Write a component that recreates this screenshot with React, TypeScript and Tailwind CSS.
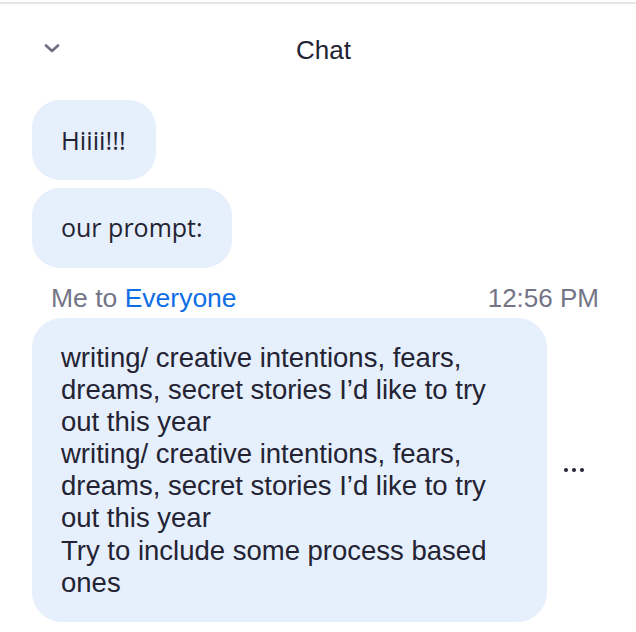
import React from "react";

const bubbleFont = { fontFamily: '"Open Sans", "Liberation Sans", Arial, sans-serif' };

export default function App() {
  const lines = [
    "writing/ creative intentions, fears,",
    "dreams, secret stories I\u2019d like to try",
    "out this year",
    "writing/ creative intentions, fears,",
    "dreams, secret stories I\u2019d like to try",
    "out this year",
    "Try to include some process based",
    "ones",
  ];
  return (
    <div className="w-[636px] h-[632px] bg-white overflow-hidden font-['Liberation_Sans',Arial,sans-serif] text-[#232333]">
      <div className="mt-[2px] h-[2px] bg-[#e6e6e6]" />
      <div className="mt-[31px] flex h-[30px]">
        <div className="w-[60px] pl-[44px] pt-[9px]">
          <svg width="16" height="9" viewBox="0 0 16 9" fill="none">
            <path d="M2 1.5 L8 7 L14 1.5" stroke="#6f6f80" strokeWidth="2.6" strokeLinecap="round" strokeLinejoin="round" />
          </svg>
        </div>
        <div className="flex-1 text-center text-[26px] leading-[30px] text-[#232333]">Chat</div>
        <div className="w-[49px]" />
      </div>
      <div className="mt-[35px] px-[32px] flex flex-col">
        <div className="flex">
          <div className="h-[80px] pl-[29px] pr-[30px] rounded-[28px] bg-[#e6effc] flex items-center text-[25.5px]" style={bubbleFont}>
            Hiiii!!!
          </div>
        </div>
        <div className="flex mt-[8px]">
          <div className="h-[80px] px-[29px] rounded-[28px] bg-[#e6effc] flex items-center text-[25px]" style={bubbleFont}>
            our prompt:
          </div>
        </div>
        <div className="mt-[15px] flex justify-between items-baseline pl-[19px] pr-[5px] leading-[30px]">
          <div className="text-[#747487] text-[26.5px]">
            Me to <span className="text-[#0e6ee6]">Everyone</span>
          </div>
          <div className="text-[#747487] text-[26px]">12:56 PM</div>
        </div>
        <div className="mt-[5px] flex items-center">
          <div className="w-[515px] rounded-[30px] bg-[#e6effc] pl-[29px] pr-[20px] pt-[24px] pb-[23px] text-[27.5px] leading-[32.1px]">
            {lines.map((l, i) => (
              <div key={i} className="whitespace-nowrap">{l}</div>
            ))}
          </div>
          <div className="ml-[17px] flex gap-[4px]">
            <span className="w-[4px] h-[4px] rounded-full bg-[#232333]" />
            <span className="w-[4px] h-[4px] rounded-full bg-[#232333]" />
            <span className="w-[4px] h-[4px] rounded-full bg-[#232333]" />
          </div>
        </div>
      </div>
    </div>
  );
}
